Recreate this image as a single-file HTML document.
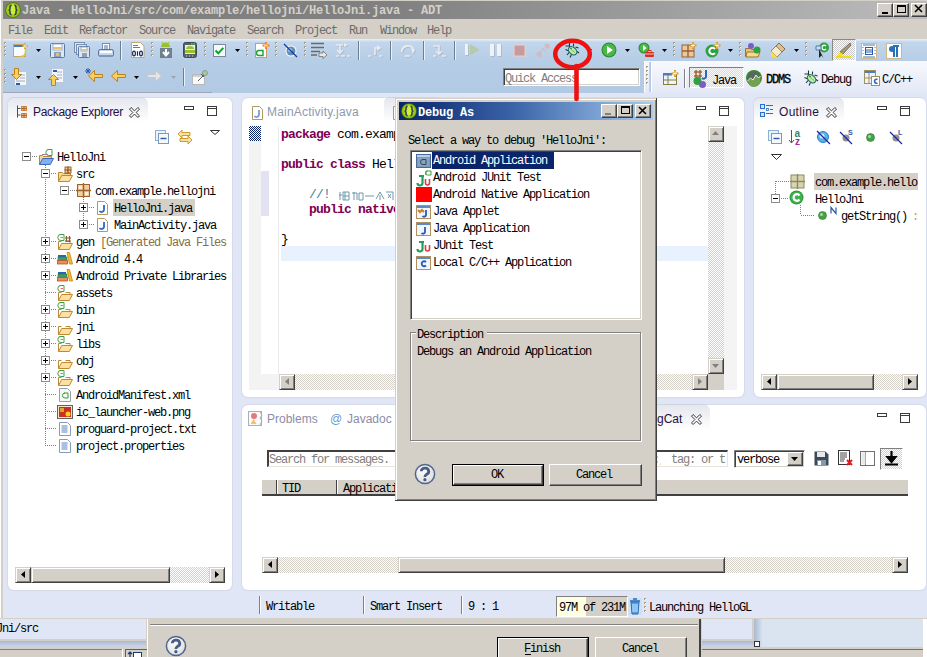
<!DOCTYPE html>
<html><head><meta charset="utf-8">
<style>
*{margin:0;padding:0;box-sizing:border-box}
html,body{width:927px;height:657px;overflow:hidden;background:#d4d0c8;position:relative;font-family:"Liberation Sans",sans-serif}
.a{position:absolute}
svg.a{overflow:visible}
.t{position:absolute;white-space:pre;font-family:"Liberation Mono",monospace;font-size:12px;letter-spacing:-1.2px;line-height:14px;color:#000}
.tb{position:absolute;white-space:pre;font-family:"Liberation Mono",monospace;font-size:12px;font-weight:bold;letter-spacing:-0.2px;line-height:14px;color:#000}
.s{position:absolute;white-space:pre;font-family:"Liberation Sans",sans-serif;font-size:12px;line-height:14px}
.c{position:absolute;white-space:pre;font-family:"Liberation Mono",monospace;font-size:13px;letter-spacing:-0.8px;line-height:15px;color:#000}
.sb{position:absolute;background:#d4d0c8;border-top:1px solid #d4d0c8;border-left:1px solid #d4d0c8;border-right:1px solid #404040;border-bottom:1px solid #404040;box-shadow:inset 1px 1px 0 #fff,inset -1px -1px 0 #808080}
.trk{position:absolute;background-color:#eae8e3;background-image:repeating-conic-gradient(#d4d0c8 0 25%,#fff 0 50%);background-size:2px 2px}
.btn{position:absolute;background:#d4d0c8;border-top:1px solid #fff;border-left:1px solid #fff;border-right:1px solid #404040;border-bottom:1px solid #404040;box-shadow:inset -1px -1px 0 #808080}
.sunk{position:absolute;background:#fff;border-top:1px solid #808080;border-left:1px solid #808080;border-right:1px solid #fff;border-bottom:1px solid #fff;box-shadow:inset 1px 1px 0 #404040,inset -1px -1px 0 #d4d0c8}
</style></head><body>
<div class="a" style="left:0px;top:0px;width:927px;height:657px;background:#d4d0c8"></div>
<div class="a" style="left:0px;top:0px;width:1px;height:618px;background:#fff"></div>
<div class="a" style="left:3px;top:1px;width:924px;height:18px;background:linear-gradient(90deg,#808080 0,#808080 42%,#bcbcbc 100%)"></div>
<svg class="a" style="left:5px;top:2px" width="16" height="16" viewBox="0 0 16 16"><circle cx="8" cy="8" r="7.8" fill="#4a7a00"/><circle cx="8" cy="8" r="7" fill="#9ccc10"/><ellipse cx="8" cy="7.5" rx="4.5" ry="5" fill="#d4f840" opacity=".8"/><path d="M6.6 3.4C4.8 3.4 5 5 5 6.5C5 7.5 4.4 8 3.5 8C4.4 8 5 8.5 5 9.5C5 11 4.8 12.6 6.6 12.6M9.4 3.4C11.2 3.4 11 5 11 6.5C11 7.5 11.6 8 12.5 8C11.6 8 11 8.5 11 9.5C11 11 11.2 12.6 9.4 12.6" stroke="#3a3a5a" stroke-width="1.6" fill="none"/></svg>
<div class="tb" style="left:22px;top:4px;color:#d4d0c8">Java - HelloJni/src/com/example/hellojni/HelloJni.java - ADT</div>
<div class="btn" style="left:877px;top:3px;width:16px;height:14px"></div>
<div class="btn" style="left:893px;top:3px;width:16px;height:14px"></div>
<div class="btn" style="left:911px;top:3px;width:16px;height:14px"></div>
<div class="a" style="left:882px;top:12px;width:6px;height:2px;background:#000"></div>
<div class="a" style="left:897px;top:5px;width:9px;height:8px;border:1px solid #000;border-top-width:2px"></div>
<svg class="a" style="left:914px;top:5px" width="9" height="8" viewBox="0 0 9 8"><path d="M1 0L8 7M8 0L1 7" stroke="#000" stroke-width="1.6"/></svg>
<div class="t" style="left:8px;top:24px;color:#6b6b6b">File</div>
<div class="t" style="left:44px;top:24px;color:#6b6b6b">Edit</div>
<div class="t" style="left:79px;top:24px;color:#6b6b6b">Refactor</div>
<div class="t" style="left:139px;top:24px;color:#6b6b6b">Source</div>
<div class="t" style="left:187px;top:24px;color:#6b6b6b">Navigate</div>
<div class="t" style="left:247px;top:24px;color:#6b6b6b">Search</div>
<div class="t" style="left:295px;top:24px;color:#6b6b6b">Project</div>
<div class="t" style="left:349px;top:24px;color:#6b6b6b">Run</div>
<div class="t" style="left:380px;top:24px;color:#6b6b6b">Window</div>
<div class="t" style="left:427px;top:24px;color:#6b6b6b">Help</div>
<div class="a" style="left:3px;top:39px;width:924px;height:22px;background:linear-gradient(#eaf1f8 0,#c2d6ec 3px,#b6cde6 100%)"></div>
<div class="a" style="left:3px;top:61px;width:641px;height:32px;background:linear-gradient(#b6cde6,#b1c9e3)"></div>
<div class="a" style="left:3px;top:92px;width:209px;height:1px;background:#a0a8b8"></div>
<div class="a" style="left:644px;top:61px;width:283px;height:32px;background:linear-gradient(#f7f9fd,#e3e8f6)"></div>
<div class="a" style="left:3px;top:93px;width:924px;height:525px;background:#e1e6f6"></div>
<svg class="a" style="left:4px;top:42px" width="2" height="16" viewBox="0 0 2 16"><rect x="0" y="0" width="2" height="2" fill="#a89b7e"/><rect x="1" y="1" width="1" height="1" fill="#fff"/><rect x="0" y="4" width="2" height="2" fill="#a89b7e"/><rect x="1" y="5" width="1" height="1" fill="#fff"/><rect x="0" y="8" width="2" height="2" fill="#a89b7e"/><rect x="1" y="9" width="1" height="1" fill="#fff"/><rect x="0" y="12" width="2" height="2" fill="#a89b7e"/><rect x="1" y="13" width="1" height="1" fill="#fff"/></svg>
<svg class="a" style="left:13px;top:43px" width="16" height="16" viewBox="0 0 16 16"><rect x="0.5" y="1.5" width="12" height="12" fill="#f8fbff" stroke="#c8a860"/><rect x="1" y="2" width="11" height="2" fill="#4a7cc0"/><path d="M12.5 4.5v4c0 3-2 5-5 5" stroke="#e8c040" fill="none" stroke-width="1.5"/><path d="M12 0v6M9 3h6" stroke="#d4a020" stroke-width="1.6"/><path d="M12 1v4M10 3h4" stroke="#fff" stroke-width=".7"/></svg>
<svg class="a" style="left:36px;top:49px" width="5" height="3" viewBox="0 0 5 3"><path d="M0 0h5L2.5 3z" fill="#000"/></svg>
<svg class="a" style="left:50px;top:43px" width="16" height="16" viewBox="0 0 16 16"><rect x="0.5" y="0.5" width="14" height="14" rx="1" fill="#dfe8f2" stroke="#5a78a0"/><rect x="3" y="1" width="9" height="6" fill="#fff" stroke="#8aa0c0" stroke-width=".8"/><rect x="3" y="4" width="9" height="2" fill="#e8c070"/><rect x="4" y="9" width="7" height="5" fill="#8aa0c0"/><rect x="6" y="10" width="3" height="3" fill="#e8c070"/></svg>
<svg class="a" style="left:74px;top:42px" width="16" height="16" viewBox="0 0 16 16"><rect x="0.5" y="0.5" width="10" height="10" fill="#dfe8f2" stroke="#7890b0"/><rect x="2.5" y="2.5" width="10" height="10" fill="#dfe8f2" stroke="#7890b0"/><rect x="4.5" y="4.5" width="11" height="11" rx="1" fill="#dfe8f2" stroke="#5a78a0"/><rect x="7" y="5" width="6" height="4" fill="#fff" stroke="#8aa0c0" stroke-width=".8"/><rect x="7" y="7" width="6" height="1.5" fill="#e8c070"/><rect x="8" y="11" width="5" height="4" fill="#8aa0c0"/></svg>
<svg class="a" style="left:98px;top:43px" width="16" height="16" viewBox="0 0 16 16"><rect x="4.5" y="0.5" width="7" height="7" fill="#fff" stroke="#7090b8"/><path d="M6 3h4M6 5h4" stroke="#4a6ea0"/><rect x="0.5" y="6.5" width="15" height="7" rx="2" fill="#c8d8ec" stroke="#5070a0"/><rect x="2" y="8" width="12" height="2" fill="#fff"/><rect x="1" y="12" width="14" height="2" fill="#8098c0"/></svg>
<div class="a" style="left:120px;top:41px;width:1px;height:19px;background:#6f7f8f"></div>
<div class="a" style="left:121px;top:41px;width:1px;height:19px;background:#e8f0f8"></div>
<svg class="a" style="left:130px;top:42px" width="16" height="16" viewBox="0 0 16 16"><path d="M1.5 0.5h9l3.5 3.5v11.5h-12.5z" fill="#fff" stroke="#c0a878"/><path d="M3 3.5h5M3 5.5h7" stroke="#5080c0"/><g stroke="#1a2a5a" stroke-width="1.2" fill="none"><ellipse cx="4" cy="11.5" rx="1.4" ry="2.3"/><path d="M7.5 9.2v4.6"/><ellipse cx="11" cy="11.5" rx="1.4" ry="2.3"/></g></svg>
<svg class="a" style="left:151px;top:42px" width="2" height="16" viewBox="0 0 2 16"><rect x="0" y="0" width="2" height="2" fill="#a89b7e"/><rect x="1" y="1" width="1" height="1" fill="#fff"/><rect x="0" y="4" width="2" height="2" fill="#a89b7e"/><rect x="1" y="5" width="1" height="1" fill="#fff"/><rect x="0" y="8" width="2" height="2" fill="#a89b7e"/><rect x="1" y="9" width="1" height="1" fill="#fff"/><rect x="0" y="12" width="2" height="2" fill="#a89b7e"/><rect x="1" y="13" width="1" height="1" fill="#fff"/></svg>
<svg class="a" style="left:159px;top:42px" width="16" height="16" viewBox="0 0 16 16"><path d="M2 5a4 4 0 0 1 9 0z" fill="#98c030"/><path d="M3 0l1.5 2M10 0l-1.5 2" stroke="#98c030"/><rect x="1" y="6" width="12" height="10" fill="#6f8090"/><path d="M7 7v6M4 10l3 3.5l3-3.5" stroke="#fff" stroke-width="2" fill="none"/></svg>
<svg class="a" style="left:183px;top:42px" width="16" height="16" viewBox="0 0 16 16"><rect x="0.5" y="0.5" width="13" height="15" rx="2" fill="#58606a" stroke="#404850"/><rect x="2" y="3" width="10" height="9" fill="#e8eef0"/><path d="M3 7a4 3 0 0 1 8 0z" fill="#98c030"/><rect x="2" y="8" width="10" height="3" fill="#98c030"/><rect x="8" y="1" width="1.5" height="1.5" fill="#30e030"/><rect x="10.5" y="1" width="1.5" height="1.5" fill="#30e030"/><path d="M3 14h1M6 14h1M9 14h1" stroke="#ddd"/></svg>
<svg class="a" style="left:204px;top:42px" width="2" height="16" viewBox="0 0 2 16"><rect x="0" y="0" width="2" height="2" fill="#a89b7e"/><rect x="1" y="1" width="1" height="1" fill="#fff"/><rect x="0" y="4" width="2" height="2" fill="#a89b7e"/><rect x="1" y="5" width="1" height="1" fill="#fff"/><rect x="0" y="8" width="2" height="2" fill="#a89b7e"/><rect x="1" y="9" width="1" height="1" fill="#fff"/><rect x="0" y="12" width="2" height="2" fill="#a89b7e"/><rect x="1" y="13" width="1" height="1" fill="#fff"/></svg>
<svg class="a" style="left:213px;top:44px" width="14" height="14" viewBox="0 0 14 14"><rect x="0.5" y="0.5" width="12" height="12" fill="#f4fbff" stroke="#7a8898"/><path d="M2.5 6.5l2.8 2.8l5-5.5" stroke="#10a020" stroke-width="2" fill="none"/></svg>
<svg class="a" style="left:235px;top:49px" width="5" height="3" viewBox="0 0 5 3"><path d="M0 0h5L2.5 3z" fill="#000"/></svg>
<svg class="a" style="left:246px;top:42px" width="2" height="16" viewBox="0 0 2 16"><rect x="0" y="0" width="2" height="2" fill="#a89b7e"/><rect x="1" y="1" width="1" height="1" fill="#fff"/><rect x="0" y="4" width="2" height="2" fill="#a89b7e"/><rect x="1" y="5" width="1" height="1" fill="#fff"/><rect x="0" y="8" width="2" height="2" fill="#a89b7e"/><rect x="1" y="9" width="1" height="1" fill="#fff"/><rect x="0" y="12" width="2" height="2" fill="#a89b7e"/><rect x="1" y="13" width="1" height="1" fill="#fff"/></svg>
<svg class="a" style="left:254px;top:42px" width="16" height="16" viewBox="0 0 16 16"><rect x="1.5" y="1.5" width="11" height="14" fill="#fff" stroke="#c0a070"/><path d="M4 8.5h5v5h-4a2.5 2.5 0 0 1 0-5" stroke="#20a030" stroke-width="1.4" fill="none"/><path d="M12 0v7M8.5 3.5h7" stroke="#f08020" stroke-width="2"/><path d="M12 1.5v4M10 3.5h4" stroke="#ffe0a0" stroke-width=".8"/></svg>
<svg class="a" style="left:275px;top:42px" width="2" height="16" viewBox="0 0 2 16"><rect x="0" y="0" width="2" height="2" fill="#a89b7e"/><rect x="1" y="1" width="1" height="1" fill="#fff"/><rect x="0" y="4" width="2" height="2" fill="#a89b7e"/><rect x="1" y="5" width="1" height="1" fill="#fff"/><rect x="0" y="8" width="2" height="2" fill="#a89b7e"/><rect x="1" y="9" width="1" height="1" fill="#fff"/><rect x="0" y="12" width="2" height="2" fill="#a89b7e"/><rect x="1" y="13" width="1" height="1" fill="#fff"/></svg>
<svg class="a" style="left:283px;top:43px" width="16" height="16" viewBox="0 0 16 16"><circle cx="8" cy="8" r="5.5" fill="#fff"/><circle cx="8" cy="8" r="4.5" fill="#6090b8"/><circle cx="7" cy="7" r="2" fill="#a0c8e8"/><path d="M1 1l13 13" stroke="#1a3a9a" stroke-width="1.3"/></svg>
<svg class="a" style="left:304px;top:42px" width="2" height="16" viewBox="0 0 2 16"><rect x="0" y="0" width="2" height="2" fill="#a89b7e"/><rect x="1" y="1" width="1" height="1" fill="#fff"/><rect x="0" y="4" width="2" height="2" fill="#a89b7e"/><rect x="1" y="5" width="1" height="1" fill="#fff"/><rect x="0" y="8" width="2" height="2" fill="#a89b7e"/><rect x="1" y="9" width="1" height="1" fill="#fff"/><rect x="0" y="12" width="2" height="2" fill="#a89b7e"/><rect x="1" y="13" width="1" height="1" fill="#fff"/></svg>
<svg class="a" style="left:311px;top:42px" width="16" height="16" viewBox="0 0 16 16"><path d="M0 1.5h13M0 5.5h13M0 9.5h9M0 13h6" stroke="#6a6a6a" stroke-width="1.6"/><path d="M8 11h4v-2l4 4l-4 3.5v-2h-4z" fill="#e8e8e8" stroke="#707070" stroke-width=".8"/></svg>
<svg class="a" style="left:335px;top:42px" width="16" height="16" viewBox="0 0 16 16"><g transform="translate(.8,.8)" opacity=".45"><path d="M1 3h7M5 3v8M2 8l3 3l3-3M1 14h3M6 14h4M12 14h3" stroke="#8a96a4" stroke-width="1.6" fill="none"/><path d="M9 1l4 2l-4 2" fill="#8a96a4"/></g><g opacity=".9"><path d="M1 3h7M5 3v8M2 8l3 3l3-3M1 14h3M6 14h4M12 14h3" stroke="#f0f0f0" stroke-width="1.6" fill="none"/><path d="M9 1l4 2l-4 2" fill="#f0f0f0"/></g></svg>
<div class="a" style="left:358px;top:41px;width:1px;height:19px;background:#6f7f8f"></div>
<div class="a" style="left:359px;top:41px;width:1px;height:19px;background:#e8f0f8"></div>
<svg class="a" style="left:367px;top:42px" width="16" height="16" viewBox="0 0 16 16"><g transform="translate(.8,.8)" opacity=".45"><path d="M8 13V6h4M10 4l3 2l-3 2M1 14h3M12 14h3" stroke="#8a96a4" stroke-width="1.6" fill="none"/></g><g opacity=".9"><path d="M8 13V6h4M10 4l3 2l-3 2M1 14h3M12 14h3" stroke="#f0f0f0" stroke-width="1.6" fill="none"/></g></svg>
<div class="a" style="left:390px;top:41px;width:1px;height:19px;background:#6f7f8f"></div>
<div class="a" style="left:391px;top:41px;width:1px;height:19px;background:#e8f0f8"></div>
<svg class="a" style="left:400px;top:42px" width="16" height="16" viewBox="0 0 16 16"><g transform="translate(.8,.8)" opacity=".45"><path d="M2 10a6 5 0 0 1 12-2" stroke="#8a96a4" stroke-width="1.8" fill="none"/><path d="M11 6l4 2l-2 4z" fill="#8a96a4"/><path d="M5 14h5" stroke="#8a96a4" stroke-width="1.6"/></g><g opacity=".9"><path d="M2 10a6 5 0 0 1 12-2" stroke="#f0f0f0" stroke-width="1.8" fill="none"/><path d="M11 6l4 2l-2 4z" fill="#f0f0f0"/><path d="M5 14h5" stroke="#f0f0f0" stroke-width="1.6"/></g></svg>
<div class="a" style="left:423px;top:41px;width:1px;height:19px;background:#6f7f8f"></div>
<div class="a" style="left:424px;top:41px;width:1px;height:19px;background:#e8f0f8"></div>
<svg class="a" style="left:432px;top:42px" width="16" height="16" viewBox="0 0 16 16"><g transform="translate(.8,.8)" opacity=".45"><path d="M1 4h6v7M4 9l3 3l3-3M1 14h3M10 14h4" stroke="#8a96a4" stroke-width="1.6" fill="none"/></g><g opacity=".9"><path d="M1 4h6v7M4 9l3 3l3-3M1 14h3M10 14h4" stroke="#f0f0f0" stroke-width="1.6" fill="none"/></g></svg>
<div class="a" style="left:454px;top:41px;width:1px;height:19px;background:#6f7f8f"></div>
<div class="a" style="left:455px;top:41px;width:1px;height:19px;background:#e8f0f8"></div>
<svg class="a" style="left:464px;top:42px" width="16" height="16" viewBox="0 0 16 16"><g transform="translate(.8,.8)" opacity=".45"><rect x="1" y="2" width="3" height="11" fill="#8a96a4"/><path d="M6 2l9 5.5l-9 5.5z" fill="#b8c8a8"/></g><g opacity=".9"><rect x="1" y="2" width="3" height="11" fill="#f8f8f8"/><path d="M6 2l9 5.5l-9 5.5z" fill="#b8c8a8"/></g></svg>
<svg class="a" style="left:488px;top:42px" width="16" height="16" viewBox="0 0 16 16"><g transform="translate(.8,.8)" opacity=".45"><rect x="2" y="2" width="4" height="12" fill="#8a96a4"/><rect x="9" y="2" width="4" height="12" fill="#8a96a4"/></g><g opacity=".9"><rect x="2" y="2" width="4" height="12" fill="#f8f8f8"/><rect x="9" y="2" width="4" height="12" fill="#f8f8f8"/></g></svg>
<svg class="a" style="left:512px;top:42px" width="16" height="16" viewBox="0 0 16 16"><g transform="translate(.8,.8)" opacity=".45"><rect x="2" y="3" width="11" height="11" fill="#c89898" stroke="#f0d0d0"/></g><g opacity=".9"><rect x="2" y="3" width="11" height="11" fill="#c89898" stroke="#f0d0d0"/></g></svg>
<svg class="a" style="left:535px;top:42px" width="16" height="16" viewBox="0 0 16 16"><g transform="translate(.8,.8)" opacity=".45"><circle cx="4" cy="12" r="2.5" fill="#d8b8b8"/><circle cx="12" cy="4" r="2.5" fill="#d8b8b8"/><path d="M4 12l4-6l3 4" stroke="#c8c0c0" fill="none"/></g><g opacity=".9"><circle cx="4" cy="12" r="2.5" fill="#d8b8b8"/><circle cx="12" cy="4" r="2.5" fill="#d8b8b8"/><path d="M4 12l4-6l3 4" stroke="#c8c0c0" fill="none"/></g></svg>
<svg class="a" style="left:563px;top:42px" width="16" height="16" viewBox="0 0 16 16"><path d="M6.5 0.5v4.5M2.5 4h4M2.5 7.5l3.5 1.5M4 13l2.5-3M7 15.5l1.5-3M10.5 1.5v3M12.5 5l3 1M14 9.5l2 1.5" stroke="#1a3a30" stroke-width="1.1"/><ellipse cx="9.6" cy="8.8" rx="3.4" ry="4.8" transform="rotate(-45 9.6 8.8)" fill="#c4eca0" stroke="#1a6a7a" stroke-width="1.1"/><path d="M8 7.5l4 3" stroke="#70b050" stroke-width=".8"/><circle cx="8" cy="6.5" r=".8" fill="#1a6a30"/></svg>
<svg class="a" style="left:587px;top:49px" width="5" height="3" viewBox="0 0 5 3"><path d="M0 0h5L2.5 3z" fill="#000"/></svg>
<svg class="a" style="left:601px;top:42px" width="16" height="16" viewBox="0 0 16 16"><circle cx="8" cy="8" r="7.5" fill="#2a8a2a"/><circle cx="8" cy="8" r="6.5" fill="#48b848"/><path d="M6 4l6 4l-6 4z" fill="#fff"/></svg>
<svg class="a" style="left:625px;top:49px" width="5" height="3" viewBox="0 0 5 3"><path d="M0 0h5L2.5 3z" fill="#000"/></svg>
<svg class="a" style="left:638px;top:42px" width="16" height="16" viewBox="0 0 16 16"><circle cx="6" cy="6" r="5.5" fill="#2a8a2a"/><circle cx="6" cy="6" r="4.5" fill="#48b848"/><path d="M5 3l3.5 3l-3.5 3z" fill="#fff"/><rect x="7" y="10" width="9" height="5" rx="1" fill="#d83020"/><rect x="10" y="8.5" width="3" height="2" fill="none" stroke="#d83020"/><path d="M7 12h9" stroke="#fff" stroke-width=".7"/></svg>
<svg class="a" style="left:662px;top:49px" width="5" height="3" viewBox="0 0 5 3"><path d="M0 0h5L2.5 3z" fill="#000"/></svg>
<svg class="a" style="left:673px;top:42px" width="2" height="16" viewBox="0 0 2 16"><rect x="0" y="0" width="2" height="2" fill="#a89b7e"/><rect x="1" y="1" width="1" height="1" fill="#fff"/><rect x="0" y="4" width="2" height="2" fill="#a89b7e"/><rect x="1" y="5" width="1" height="1" fill="#fff"/><rect x="0" y="8" width="2" height="2" fill="#a89b7e"/><rect x="1" y="9" width="1" height="1" fill="#fff"/><rect x="0" y="12" width="2" height="2" fill="#a89b7e"/><rect x="1" y="13" width="1" height="1" fill="#fff"/></svg>
<svg class="a" style="left:681px;top:42px" width="16" height="16" viewBox="0 0 16 16"><rect x="1" y="3" width="12" height="12" fill="#e8c8a0" stroke="#a06030"/><path d="M7 3v12M1 9h12" stroke="#a06030" stroke-width="1.4"/><path d="M12 0v7M8.5 3.5h7" stroke="#d8a020" stroke-width="2"/><path d="M12 1.5v4M10 3.5h4" stroke="#fff" stroke-width=".8"/></svg>
<svg class="a" style="left:705px;top:42px" width="16" height="16" viewBox="0 0 16 16"><circle cx="7" cy="9" r="6.5" fill="#30a040"/><path d="M10 7a3.2 3.2 0 1 0 0 4" stroke="#fff" stroke-width="2" fill="none"/><path d="M12 0v7M8.5 3.5h7" stroke="#d8a020" stroke-width="2"/><path d="M12 1.5v4M10 3.5h4" stroke="#fff" stroke-width=".8"/></svg>
<svg class="a" style="left:728px;top:49px" width="5" height="3" viewBox="0 0 5 3"><path d="M0 0h5L2.5 3z" fill="#000"/></svg>
<svg class="a" style="left:739px;top:42px" width="2" height="16" viewBox="0 0 2 16"><rect x="0" y="0" width="2" height="2" fill="#a89b7e"/><rect x="1" y="1" width="1" height="1" fill="#fff"/><rect x="0" y="4" width="2" height="2" fill="#a89b7e"/><rect x="1" y="5" width="1" height="1" fill="#fff"/><rect x="0" y="8" width="2" height="2" fill="#a89b7e"/><rect x="1" y="9" width="1" height="1" fill="#fff"/><rect x="0" y="12" width="2" height="2" fill="#a89b7e"/><rect x="1" y="13" width="1" height="1" fill="#fff"/></svg>
<svg class="a" style="left:745px;top:42px" width="16" height="16" viewBox="0 0 16 16"><path d="M0.5 6.5h5l1 1h7v7h-13z" fill="#e8c070" stroke="#a07828"/><path d="M2 10h13l-2 5h-12z" fill="#f8d890" stroke="#a07828"/><circle cx="6" cy="4" r="3" fill="#7860c0"/><circle cx="12" cy="8" r="3.5" fill="#30a040"/></svg>
<svg class="a" style="left:770px;top:42px" width="16" height="16" viewBox="0 0 16 16"><path d="M9 1l6 6l-3 3l-6-6z" fill="#d8c098" stroke="#8a6a40"/><path d="M6 4l6 6l-5 5l-6-6z" fill="#f4ead0" stroke="#a08050"/><path d="M1 9l6 6l-6 0z" fill="#f8e040"/></svg>
<svg class="a" style="left:794px;top:49px" width="5" height="3" viewBox="0 0 5 3"><path d="M0 0h5L2.5 3z" fill="#000"/></svg>
<svg class="a" style="left:805px;top:42px" width="2" height="16" viewBox="0 0 2 16"><rect x="0" y="0" width="2" height="2" fill="#a89b7e"/><rect x="1" y="1" width="1" height="1" fill="#fff"/><rect x="0" y="4" width="2" height="2" fill="#a89b7e"/><rect x="1" y="5" width="1" height="1" fill="#fff"/><rect x="0" y="8" width="2" height="2" fill="#a89b7e"/><rect x="1" y="9" width="1" height="1" fill="#fff"/><rect x="0" y="12" width="2" height="2" fill="#a89b7e"/><rect x="1" y="13" width="1" height="1" fill="#fff"/></svg>
<svg class="a" style="left:814px;top:42px" width="16" height="16" viewBox="0 0 16 16"><circle cx="10" cy="5.5" r="5" fill="#30a040"/><path d="M12 4a2.3 2.3 0 1 0 0 3" stroke="#fff" stroke-width="1.4" fill="none"/><path d="M2 4h5v4h-5z" fill="#c8e0f8" stroke="#5a7aa0"/><path d="M5 7v9l2.5-2.5l2 2.5z" fill="#222"/></svg>
<div class="a" style="left:832px;top:39px;width:24px;height:22px;background-color:#eee;background-image:repeating-conic-gradient(#c8c8c8 0 25%,#fff 0 50%);background-size:2px 2px;border-left:1px solid #888;border-top:1px solid #888;border-right:1px solid #fff;border-bottom:1px solid #fff"></div>
<svg class="a" style="left:836px;top:42px" width="16" height="16" viewBox="0 0 16 16"><path d="M14 1l1 2l-8 9l-3-2z" fill="#a89878" stroke="#6a5a40" stroke-width=".8"/><path d="M4 10l3 2l-2 3h-5z" fill="#f8e020"/><path d="M0 15h15" stroke="#f0d800" stroke-width="1.6"/></svg>
<svg class="a" style="left:861px;top:43px" width="16" height="16" viewBox="0 0 16 16"><rect x="0.5" y="0.5" width="15" height="15" fill="#fff" stroke="#d0b888"/><path d="M2 2h12M2 14h12" stroke="#4a7ab8"/><rect x="4.5" y="4.5" width="7" height="7" fill="#fff" stroke="#2a5aa8"/><path d="M5 7h6M5 9h6" stroke="#2a5aa8"/><path d="M2 4v1M2 7v1M2 10v1M14 4v1M14 7v1M14 10v1" stroke="#4a7ab8"/></svg>
<svg class="a" style="left:886px;top:43px" width="16" height="16" viewBox="0 0 16 16"><rect x="0.5" y="0.5" width="15" height="15" fill="#fff" stroke="#d0b888"/><path d="M7 3h6M8 3v11M11 3v11" stroke="#2a70b8" stroke-width="2"/><circle cx="6" cy="6" r="3" fill="#2a70b8"/></svg>
<svg class="a" style="left:4px;top:69px" width="2" height="16" viewBox="0 0 2 16"><rect x="0" y="0" width="2" height="2" fill="#a89b7e"/><rect x="1" y="1" width="1" height="1" fill="#fff"/><rect x="0" y="4" width="2" height="2" fill="#a89b7e"/><rect x="1" y="5" width="1" height="1" fill="#fff"/><rect x="0" y="8" width="2" height="2" fill="#a89b7e"/><rect x="1" y="9" width="1" height="1" fill="#fff"/><rect x="0" y="12" width="2" height="2" fill="#a89b7e"/><rect x="1" y="13" width="1" height="1" fill="#fff"/></svg>
<svg class="a" style="left:11px;top:68px" width="16" height="18" viewBox="0 0 16 18"><rect x="3.5" y="3.5" width="12" height="14" fill="#f4f6fa" stroke="#c0c8d8"/><path d="M9 7h5M9 10h5M5 13h9" stroke="#9ab0d0"/><rect x="5" y="15" width="4" height="2" fill="#2a5aa8"/><path d="M3.5 0.5v6h-3l5 5l5-5h-3v-6z" fill="#f8d060" stroke="#c08018"/></svg>
<svg class="a" style="left:36px;top:76px" width="5" height="3" viewBox="0 0 5 3"><path d="M0 0h5L2.5 3z" fill="#000"/></svg>
<svg class="a" style="left:48px;top:68px" width="16" height="18" viewBox="0 0 16 18"><rect x="3.5" y="0.5" width="12" height="14" fill="#f4f6fa" stroke="#c0c8d8"/><path d="M9 4h5M9 7h5M9 10h5" stroke="#9ab0d0"/><rect x="5" y="2" width="4" height="2" fill="#2a5aa8"/><path d="M3.5 17.5v-6h-3l5-5l5 5h-3v6z" fill="#f8d060" stroke="#c08018"/></svg>
<svg class="a" style="left:73px;top:76px" width="5" height="3" viewBox="0 0 5 3"><path d="M0 0h5L2.5 3z" fill="#000"/></svg>
<svg class="a" style="left:85px;top:68px" width="18" height="16" viewBox="0 0 18 16"><path d="M17.5 6.5h-8v-4l-6 5.5l6 5.5v-4h8z" fill="#f8d060" stroke="#c08018"/><path d="M1 1l4 4M5 1l-4 4M3 0v6M0 3h6" stroke="#2a5aa8"/></svg>
<svg class="a" style="left:110px;top:68px" width="16" height="16" viewBox="0 0 16 16"><path d="M15.5 6.5h-8v-4l-6 5.5l6 5.5v-4h8z" fill="#f8d060" stroke="#c08018"/></svg>
<svg class="a" style="left:134px;top:76px" width="5" height="3" viewBox="0 0 5 3"><path d="M0 0h5L2.5 3z" fill="#000"/></svg>
<svg class="a" style="left:147px;top:68px" width="16" height="16" viewBox="0 0 16 16"><path d="M0.5 6.5h8v-4l6 5.5l-6 5.5v-4h-8z" fill="#e4e4e4" stroke="#c8c8c8"/></svg>
<svg class="a" style="left:171px;top:76px" width="5" height="3" viewBox="0 0 5 3"><path d="M0 0h5L2.5 3z" fill="#9aa4ae"/></svg>
<div class="a" style="left:183px;top:68px;width:1px;height:18px;background:#6f7f8f"></div>
<div class="a" style="left:184px;top:68px;width:1px;height:18px;background:#e8f0f8"></div>
<svg class="a" style="left:192px;top:70px" width="16" height="16" viewBox="0 0 16 16"><rect x="0.5" y="4.5" width="12" height="10" fill="#fafafa" stroke="#b8b8b8"/><path d="M1 6h11" stroke="#9aaac0"/><path d="M6 11l6-6" stroke="#606060"/><circle cx="13" cy="3" r="2.5" fill="#a8c8a0" stroke="#708070" stroke-width=".6"/><path d="M9 4l3 3" stroke="#506050"/></svg>
<div class="a" style="left:503px;top:68px;width:137px;height:18px;background:#fff;border-top:1px solid #808080;border-left:1px solid #808080;border-bottom:1px solid #fff;border-right:1px solid #fff;box-shadow:inset 1px 1px 0 #404040,inset -1px -1px 0 #d4d0c8"></div>
<div class="t" style="left:505px;top:72px;color:#808080">Quick Access</div>
<div class="a" style="left:644px;top:61px;width:1px;height:31px;background:#fff"></div>
<svg class="a" style="left:646px;top:66px" width="2" height="20" viewBox="0 0 2 20"><rect x="0" y="0" width="2" height="2" fill="#a89b7e"/><rect x="1" y="1" width="1" height="1" fill="#fff"/><rect x="0" y="4" width="2" height="2" fill="#a89b7e"/><rect x="1" y="5" width="1" height="1" fill="#fff"/><rect x="0" y="8" width="2" height="2" fill="#a89b7e"/><rect x="1" y="9" width="1" height="1" fill="#fff"/><rect x="0" y="12" width="2" height="2" fill="#a89b7e"/><rect x="1" y="13" width="1" height="1" fill="#fff"/><rect x="0" y="16" width="2" height="2" fill="#a89b7e"/><rect x="1" y="17" width="1" height="1" fill="#fff"/></svg>
<div class="a" style="left:649px;top:62px;width:3px;height:30px;background:linear-gradient(90deg,#c8daee,#a8c2e0);border-right:1px solid #fff"></div>
<svg class="a" style="left:662px;top:70px" width="16" height="16" viewBox="0 0 16 16"><rect x="1.5" y="3.5" width="13" height="11" fill="#eaf6fe" stroke="#8a7a40"/><rect x="1" y="3" width="9" height="2.5" fill="#4a7ac8"/><path d="M6 4v11M2 10h12" stroke="#8a7a40"/><path d="M13 0v7M9.5 3.5h7" stroke="#d8a020" stroke-width="2"/><path d="M13 1.5v4M11 3.5h4" stroke="#fff" stroke-width=".8"/></svg>
<div class="a" style="left:684px;top:69px;width:2px;height:19px;background:#808080;border-right:1px solid #fff"></div>
<div class="a" style="left:689px;top:67px;width:55px;height:21px;background-color:#eee;background-image:repeating-conic-gradient(#d8d8d8 0 25%,#fafafa 0 50%);background-size:2px 2px;border-top:1px solid #808080;border-left:1px solid #808080;border-right:1px solid #fff;border-bottom:1px solid #fff"></div>
<svg class="a" style="left:693px;top:70px" width="16" height="18" viewBox="0 0 16 18"><path d="M1 2h8M1 6h8M3 0v8M7 0v8" stroke="#a06838" stroke-width="1.5"/><path d="M13 0v7a2.5 2.5 0 0 1-4 1" stroke="#2a6ab8" stroke-width="2" fill="none"/><circle cx="4.5" cy="11" r="4" fill="#30a040"/><circle cx="9.5" cy="14.5" r="3.5" fill="#7860c0"/></svg>
<div class="t" style="left:712px;top:74px;">Java</div>
<svg class="a" style="left:746px;top:70px" width="17" height="17" viewBox="0 0 17 17"><circle cx="8" cy="8" r="8" fill="#3a8a2a"/><circle cx="8" cy="8" r="6.5" fill="#586860"/><path d="M1.5 11l3-3l2.5 2l3-5l2.5 3l2-2v4a6.5 6.5 0 0 1-13 1z" fill="#70a050"/><path d="M1.5 11l3-3l2.5 2l3-5l2.5 3l2-2" stroke="#e8f0e0" fill="none" stroke-width="1"/></svg>
<div class="t" style="left:766px;top:73px;-webkit-text-stroke:0.3px #000">DDMS</div>
<svg class="a" style="left:802px;top:70px" width="16" height="16" viewBox="0 0 16 16"><path d="M6.5 0.5v4.5M2.5 4h4M2.5 7.5l3.5 1.5M4 13l2.5-3M7 15.5l1.5-3M10.5 1.5v3M12.5 5l3 1M14 9.5l2 1.5" stroke="#1a3a30" stroke-width="1.1"/><ellipse cx="9.6" cy="8.8" rx="3.4" ry="4.8" transform="rotate(-45 9.6 8.8)" fill="#c4eca0" stroke="#1a6a7a" stroke-width="1.1"/><path d="M8 7.5l4 3" stroke="#70b050" stroke-width=".8"/><circle cx="8" cy="6.5" r=".8" fill="#1a6a30"/></svg>
<div class="t" style="left:821px;top:73px;">Debug</div>
<svg class="a" style="left:864px;top:70px" width="16" height="16" viewBox="0 0 16 16"><rect x="0.5" y="0.5" width="11" height="13" fill="#f0f4fa" stroke="#a09060"/><rect x="1" y="1" width="10" height="2" fill="#4a7ac8"/><path d="M5 3v11M1 8h10" stroke="#a09060"/><rect x="7.5" y="6.5" width="8" height="9" fill="#fff" stroke="#a09060"/><path d="M13.5 9.5a2 2 0 1 0 0 3.5" stroke="#2a6ab8" stroke-width="1.6" fill="none"/></svg>
<div class="t" style="left:882px;top:73px;">C/C++</div>
<div class="a" style="left:8px;top:98px;width:224px;height:492px;background:#fff;border-radius:6px;box-shadow:0 0 0 1px #d6dbea,0 1px 1px #cfd5e6"></div>
<div class="a" style="left:8px;top:98px;width:140px;height:24px;border-radius:6px 8px 0 0;background:linear-gradient(#e4e7ee,#fff);box-shadow:0 -1px 0 #cfd3dc"></div>
<svg class="a" style="left:16px;top:105px" width="11" height="13" viewBox="0 0 11 13"><path d="M1.5 0.5v12M1.5 3.5h3M1.5 10h3" stroke="#505050" stroke-width="1"/><rect x="5" y="1" width="6" height="5" fill="#f4c080"/><rect x="5" y="8" width="6" height="5" fill="#f4c080"/><path d="M8 1v5M5 3.5h6M8 8v5M5 10.5h6" stroke="#b06020" stroke-width="1"/><path d="M5.5 1.5h5v4h-5zM5.5 8.5h5v4h-5z" stroke="#c07030" fill="none" stroke-width=".8"/></svg>
<div class="s" style="left:33px;top:105px;color:#2a1040;font-size:12px;letter-spacing:-0.3px">Package Explorer</div>
<svg class="a" style="left:129px;top:107px" width="11" height="11" viewBox="0 0 11 11"><path d="M0.5 2.1L2.1 0.5L5.5 3.9L8.9 0.5L10.5 2.1L7.1 5.5L10.5 8.9L8.9 10.5L5.5 7.1L2.1 10.5L0.5 8.9L3.9 5.5z" fill="#fff" stroke="#333" stroke-width="1"/></svg>
<div class="a" style="left:184px;top:106px;width:10px;height:4px;border:1px solid #3a3a3a"></div>
<div class="a" style="left:207px;top:106px;width:10px;height:10px;border:1px solid #3a3a3a"></div>
<div class="a" style="left:207px;top:108px;width:10px;height:1px;background:#3a3a3a"></div>
<svg class="a" style="left:155px;top:130px" width="14" height="14" viewBox="0 0 14 14"><rect x="0.5" y="0.5" width="10" height="10" fill="#eaf2fb" stroke="#8ab0d8"/><rect x="3.5" y="3.5" width="10" height="10" fill="#f4f8fd" stroke="#7a9ac0"/><path d="M5.5 8.5h6" stroke="#2a5aa8" stroke-width="1.4"/></svg>
<svg class="a" style="left:177px;top:129px" width="16" height="16" viewBox="0 0 16 16"><path d="M1 5l4-4v2.5h8v3h-8v2.5z" fill="#f8e0a0" stroke="#c89020" stroke-width=".9"/><path d="M15 11l-4-4v2.5h-8v3h8v2.5z" fill="#f8e0a0" stroke="#c89020" stroke-width=".9"/></svg>
<svg class="a" style="left:210px;top:130px" width="10" height="5" viewBox="0 0 10 5"><path d="M0.5 0.5h9L5 4.5z" fill="#fff" stroke="#333"/></svg>
<div class="a" style="left:26px;top:162px;width:1px;height:0px;background-image:linear-gradient(#808080 50%,transparent 50%);background-size:1px 2px"></div>
<div class="a" style="left:45px;top:163px;width:1px;height:283px;background-image:linear-gradient(#808080 50%,transparent 50%);background-size:1px 2px"></div>
<div class="a" style="left:64px;top:180px;width:1px;height:2px;background-image:linear-gradient(#808080 50%,transparent 50%);background-size:1px 2px"></div>
<div class="a" style="left:83px;top:197px;width:1px;height:25px;background-image:linear-gradient(#808080 50%,transparent 50%);background-size:1px 2px"></div>
<div class="a" style="left:22px;top:152px;width:9px;height:9px;border:1px solid #8c8c8c;background:#fff"></div>
<div class="a" style="left:24px;top:156px;width:5px;height:1px;background:#000"></div>
<div class="a" style="left:32px;top:156px;width:5px;height:1px;background-image:linear-gradient(90deg,#808080 50%,transparent 50%);background-size:2px 1px"></div>
<svg class="a" style="left:38px;top:149px" width="16" height="16" viewBox="0 0 16 16"><path d="M1.5 15.5v-9h3l1 1h8v2" stroke="#b88838" fill="#f8d890"/><path d="M1.5 15.5l3.2-6h10.8l-3.2 6z" fill="#80b0f0" stroke="#3a6ac0"/><path d="M9.5 0.5h4.5v6h-3.2a3 3 0 0 1 0-6" stroke="#40a040" fill="#fff"/><path d="M4 5.5h6" stroke="#a080a0"/></svg>
<div class="t" style="left:57px;top:151px;">HelloJni</div>
<div class="a" style="left:41px;top:169px;width:9px;height:9px;border:1px solid #8c8c8c;background:#fff"></div>
<div class="a" style="left:43px;top:173px;width:5px;height:1px;background:#000"></div>
<div class="a" style="left:51px;top:173px;width:5px;height:1px;background-image:linear-gradient(90deg,#808080 50%,transparent 50%);background-size:2px 1px"></div>
<svg class="a" style="left:57px;top:166px" width="16" height="16" viewBox="0 0 16 16"><path d="M1.5 15.5v-9h4l1 1h7v2" stroke="#b88838" fill="#f8d890"/><path d="M1.5 15.5l3.2-6h10.8l-3.2 6z" fill="#fbe0a0" stroke="#c08830"/><rect x="8" y="1" width="6" height="6" fill="#f0c890" stroke="#8a5020" stroke-width=".8"/><path d="M11 0.5v7M7.5 4h7" stroke="#8a5020" stroke-width="1.2"/></svg>
<div class="t" style="left:76px;top:168px;">src</div>
<div class="a" style="left:60px;top:186px;width:9px;height:9px;border:1px solid #8c8c8c;background:#fff"></div>
<div class="a" style="left:62px;top:190px;width:5px;height:1px;background:#000"></div>
<div class="a" style="left:70px;top:190px;width:5px;height:1px;background-image:linear-gradient(90deg,#808080 50%,transparent 50%);background-size:2px 1px"></div>
<svg class="a" style="left:76px;top:183px" width="16" height="16" viewBox="0 0 16 16"><rect x="1.5" y="1.5" width="12" height="12" fill="#f0d0a0" stroke="#a06030"/><path d="M7.5 0v15M0 7.5h15" stroke="#a06030" stroke-width="1.4"/><rect x="3" y="3" width="3" height="3" fill="#fff0d0"/><rect x="9" y="9" width="3" height="3" fill="#fff0d0"/></svg>
<div class="t" style="left:95px;top:185px;">com.example.hellojni</div>
<div class="a" style="left:79px;top:203px;width:9px;height:9px;border:1px solid #8c8c8c;background:#fff"></div>
<div class="a" style="left:81px;top:207px;width:5px;height:1px;background:#000"></div>
<div class="a" style="left:83px;top:205px;width:1px;height:5px;background:#000"></div>
<div class="a" style="left:89px;top:207px;width:5px;height:1px;background-image:linear-gradient(90deg,#808080 50%,transparent 50%);background-size:2px 1px"></div>
<svg class="a" style="left:95px;top:200px" width="16" height="16" viewBox="0 0 16 16"><path d="M2.5 1.5h7l3 3v10h-10z" fill="#fff" stroke="#b09a60"/><path d="M9 5v5a2.5 2.5 0 0 1-4.5 1" stroke="#2a6ac8" stroke-width="1.8" fill="none"/></svg>
<div class="a" style="left:113px;top:199px;width:82px;height:17px;background:#d4d0c8"></div>
<div class="t" style="left:114px;top:202px;">HelloJni.java</div>
<div class="a" style="left:79px;top:220px;width:9px;height:9px;border:1px solid #8c8c8c;background:#fff"></div>
<div class="a" style="left:81px;top:224px;width:5px;height:1px;background:#000"></div>
<div class="a" style="left:83px;top:222px;width:1px;height:5px;background:#000"></div>
<div class="a" style="left:89px;top:224px;width:5px;height:1px;background-image:linear-gradient(90deg,#808080 50%,transparent 50%);background-size:2px 1px"></div>
<svg class="a" style="left:95px;top:217px" width="16" height="16" viewBox="0 0 16 16"><path d="M2.5 1.5h7l3 3v10h-10z" fill="#fff" stroke="#b09a60"/><path d="M9 5v5a2.5 2.5 0 0 1-4.5 1" stroke="#2a6ac8" stroke-width="1.8" fill="none"/></svg>
<div class="t" style="left:114px;top:219px;">MainActivity.java</div>
<div class="a" style="left:41px;top:237px;width:9px;height:9px;border:1px solid #8c8c8c;background:#fff"></div>
<div class="a" style="left:43px;top:241px;width:5px;height:1px;background:#000"></div>
<div class="a" style="left:45px;top:239px;width:1px;height:5px;background:#000"></div>
<div class="a" style="left:51px;top:241px;width:5px;height:1px;background-image:linear-gradient(90deg,#808080 50%,transparent 50%);background-size:2px 1px"></div>
<svg class="a" style="left:57px;top:234px" width="16" height="16" viewBox="0 0 16 16"><path d="M1.5 15.5v-8M1.5 7.5h3M8.5 7.5h4.5v2" stroke="#b88838" fill="none"/><path d="M1.5 15.5l3.2-6h10.8l-3.2 6z" fill="#fbe0a0" stroke="#c08830"/><path d="M2.5 0.5h4.5v6h-3.2a3 3 0 0 1 0-6" stroke="#40a040" fill="#fff"/><path d="M3.5 3.5h2.5" stroke="#e07070"/><path d="M9.5 2v6M12.5 2v6M8 4h6M8 7h6" stroke="#8a5a30" stroke-width="1.2"/></svg>
<div class="t" style="left:76px;top:236px;">gen</div>
<div class="t" style="left:100px;top:236px;color:#8a7040">[Generated Java Files]</div>
<div class="a" style="left:41px;top:254px;width:9px;height:9px;border:1px solid #8c8c8c;background:#fff"></div>
<div class="a" style="left:43px;top:258px;width:5px;height:1px;background:#000"></div>
<div class="a" style="left:45px;top:256px;width:1px;height:5px;background:#000"></div>
<div class="a" style="left:51px;top:258px;width:5px;height:1px;background-image:linear-gradient(90deg,#808080 50%,transparent 50%);background-size:2px 1px"></div>
<svg class="a" style="left:57px;top:251px" width="16" height="16" viewBox="0 0 16 16"><rect x="1" y="4" width="8" height="2" fill="#2a62b8"/><rect x="1" y="6" width="9" height="3.5" fill="#3a9a6a" stroke="#2a7a4a" stroke-width=".6"/><rect x="0.5" y="9.5" width="10" height="3.5" fill="#e8905a" stroke="#b05820" stroke-width=".8"/><path d="M10 1.5l2.5 0l3 11.5h-3z" fill="#f8c030" stroke="#c08010" stroke-width=".8"/></svg>
<div class="t" style="left:76px;top:253px;">Android 4.4</div>
<div class="a" style="left:41px;top:271px;width:9px;height:9px;border:1px solid #8c8c8c;background:#fff"></div>
<div class="a" style="left:43px;top:275px;width:5px;height:1px;background:#000"></div>
<div class="a" style="left:45px;top:273px;width:1px;height:5px;background:#000"></div>
<div class="a" style="left:51px;top:275px;width:5px;height:1px;background-image:linear-gradient(90deg,#808080 50%,transparent 50%);background-size:2px 1px"></div>
<svg class="a" style="left:57px;top:268px" width="16" height="16" viewBox="0 0 16 16"><rect x="1" y="4" width="8" height="2" fill="#2a62b8"/><rect x="1" y="6" width="9" height="3.5" fill="#3a9a6a" stroke="#2a7a4a" stroke-width=".6"/><rect x="0.5" y="9.5" width="10" height="3.5" fill="#e8905a" stroke="#b05820" stroke-width=".8"/><path d="M10 1.5l2.5 0l3 11.5h-3z" fill="#f8c030" stroke="#c08010" stroke-width=".8"/></svg>
<div class="t" style="left:76px;top:270px;">Android Private Libraries</div>
<div class="a" style="left:45px;top:292px;width:11px;height:1px;background-image:linear-gradient(90deg,#808080 50%,transparent 50%);background-size:2px 1px"></div>
<svg class="a" style="left:57px;top:285px" width="16" height="16" viewBox="0 0 16 16"><path d="M1.5 15.5v-8M1.5 7.5h3M8.5 7.5h4.5v2" stroke="#b88838" fill="none"/><path d="M1.5 15.5l3.2-6h10.8l-3.2 6z" fill="#fbe0a0" stroke="#c08830"/><path d="M2.5 0.5h4.5v6h-3.2a3 3 0 0 1 0-6" stroke="#40a040" fill="#fff"/><path d="M3.5 3.5h2.5" stroke="#e07070"/></svg>
<div class="t" style="left:76px;top:287px;">assets</div>
<div class="a" style="left:41px;top:305px;width:9px;height:9px;border:1px solid #8c8c8c;background:#fff"></div>
<div class="a" style="left:43px;top:309px;width:5px;height:1px;background:#000"></div>
<div class="a" style="left:45px;top:307px;width:1px;height:5px;background:#000"></div>
<div class="a" style="left:51px;top:309px;width:5px;height:1px;background-image:linear-gradient(90deg,#808080 50%,transparent 50%);background-size:2px 1px"></div>
<svg class="a" style="left:57px;top:302px" width="16" height="16" viewBox="0 0 16 16"><path d="M1.5 15.5v-8M1.5 7.5h3M8.5 7.5h4.5v2" stroke="#b88838" fill="none"/><path d="M1.5 15.5l3.2-6h10.8l-3.2 6z" fill="#fbe0a0" stroke="#c08830"/><path d="M2.5 0.5h4.5v6h-3.2a3 3 0 0 1 0-6" stroke="#40a040" fill="#fff"/><path d="M3.5 3.5h2.5" stroke="#e07070"/></svg>
<div class="t" style="left:76px;top:304px;">bin</div>
<div class="a" style="left:41px;top:322px;width:9px;height:9px;border:1px solid #8c8c8c;background:#fff"></div>
<div class="a" style="left:43px;top:326px;width:5px;height:1px;background:#000"></div>
<div class="a" style="left:45px;top:324px;width:1px;height:5px;background:#000"></div>
<div class="a" style="left:51px;top:326px;width:5px;height:1px;background-image:linear-gradient(90deg,#808080 50%,transparent 50%);background-size:2px 1px"></div>
<svg class="a" style="left:57px;top:319px" width="16" height="16" viewBox="0 0 16 16"><path d="M1.5 15.5v-8M1.5 7.5h3M8.5 7.5h4.5v2" stroke="#b88838" fill="none"/><path d="M1.5 15.5l3.2-6h10.8l-3.2 6z" fill="#fbe0a0" stroke="#c08830"/></svg>
<div class="t" style="left:76px;top:321px;">jni</div>
<div class="a" style="left:41px;top:339px;width:9px;height:9px;border:1px solid #8c8c8c;background:#fff"></div>
<div class="a" style="left:43px;top:343px;width:5px;height:1px;background:#000"></div>
<div class="a" style="left:45px;top:341px;width:1px;height:5px;background:#000"></div>
<div class="a" style="left:51px;top:343px;width:5px;height:1px;background-image:linear-gradient(90deg,#808080 50%,transparent 50%);background-size:2px 1px"></div>
<svg class="a" style="left:57px;top:336px" width="16" height="16" viewBox="0 0 16 16"><path d="M1.5 15.5v-8M1.5 7.5h3M8.5 7.5h4.5v2" stroke="#b88838" fill="none"/><path d="M1.5 15.5l3.2-6h10.8l-3.2 6z" fill="#fbe0a0" stroke="#c08830"/><path d="M2.5 0.5h4.5v6h-3.2a3 3 0 0 1 0-6" stroke="#40a040" fill="#fff"/><path d="M3.5 3.5h2.5" stroke="#e07070"/></svg>
<div class="t" style="left:76px;top:338px;">libs</div>
<div class="a" style="left:41px;top:356px;width:9px;height:9px;border:1px solid #8c8c8c;background:#fff"></div>
<div class="a" style="left:43px;top:360px;width:5px;height:1px;background:#000"></div>
<div class="a" style="left:45px;top:358px;width:1px;height:5px;background:#000"></div>
<div class="a" style="left:51px;top:360px;width:5px;height:1px;background-image:linear-gradient(90deg,#808080 50%,transparent 50%);background-size:2px 1px"></div>
<svg class="a" style="left:57px;top:353px" width="16" height="16" viewBox="0 0 16 16"><path d="M1.5 15.5v-8M1.5 7.5h3M8.5 7.5h4.5v2" stroke="#b88838" fill="none"/><path d="M1.5 15.5l3.2-6h10.8l-3.2 6z" fill="#fbe0a0" stroke="#c08830"/></svg>
<div class="t" style="left:76px;top:355px;">obj</div>
<div class="a" style="left:41px;top:373px;width:9px;height:9px;border:1px solid #8c8c8c;background:#fff"></div>
<div class="a" style="left:43px;top:377px;width:5px;height:1px;background:#000"></div>
<div class="a" style="left:45px;top:375px;width:1px;height:5px;background:#000"></div>
<div class="a" style="left:51px;top:377px;width:5px;height:1px;background-image:linear-gradient(90deg,#808080 50%,transparent 50%);background-size:2px 1px"></div>
<svg class="a" style="left:57px;top:370px" width="16" height="16" viewBox="0 0 16 16"><path d="M1.5 15.5v-8M1.5 7.5h3M8.5 7.5h4.5v2" stroke="#b88838" fill="none"/><path d="M1.5 15.5l3.2-6h10.8l-3.2 6z" fill="#fbe0a0" stroke="#c08830"/><path d="M2.5 0.5h4.5v6h-3.2a3 3 0 0 1 0-6" stroke="#40a040" fill="#fff"/><path d="M3.5 3.5h2.5" stroke="#e07070"/></svg>
<div class="t" style="left:76px;top:372px;">res</div>
<div class="a" style="left:45px;top:394px;width:11px;height:1px;background-image:linear-gradient(90deg,#808080 50%,transparent 50%);background-size:2px 1px"></div>
<svg class="a" style="left:57px;top:387px" width="16" height="16" viewBox="0 0 16 16"><path d="M2.5 1.5h8l3 3v10h-11z" fill="#f8f8f8" stroke="#9aa0a8"/><path d="M7 6h4v5h-3a2.5 2.5 0 0 1 0-5" stroke="#30a030" fill="none" stroke-width="1"/></svg>
<div class="t" style="left:76px;top:389px;">AndroidManifest.xml</div>
<div class="a" style="left:45px;top:411px;width:11px;height:1px;background-image:linear-gradient(90deg,#808080 50%,transparent 50%);background-size:2px 1px"></div>
<svg class="a" style="left:57px;top:404px" width="16" height="16" viewBox="0 0 16 16"><rect x="0.5" y="1.5" width="15" height="13" fill="#f0e8d0" stroke="#606060"/><rect x="2" y="3" width="12" height="10" fill="#c83020"/><circle cx="11" cy="10" r="2.5" fill="#f8d020"/><rect x="3" y="4" width="4" height="4" fill="#e8a030"/></svg>
<div class="t" style="left:76px;top:406px;">ic_launcher-web.png</div>
<div class="a" style="left:45px;top:428px;width:11px;height:1px;background-image:linear-gradient(90deg,#808080 50%,transparent 50%);background-size:2px 1px"></div>
<svg class="a" style="left:57px;top:421px" width="16" height="16" viewBox="0 0 16 16"><path d="M2.5 1.5h8l3 3v10h-11z" fill="#fff" stroke="#8a9ab0"/><path d="M4.5 5h6M4.5 7h6M4.5 9h6M4.5 11h6" stroke="#5a80c0"/></svg>
<div class="t" style="left:76px;top:423px;">proguard-project.txt</div>
<div class="a" style="left:45px;top:445px;width:11px;height:1px;background-image:linear-gradient(90deg,#808080 50%,transparent 50%);background-size:2px 1px"></div>
<svg class="a" style="left:57px;top:438px" width="16" height="16" viewBox="0 0 16 16"><path d="M2.5 1.5h8l3 3v10h-11z" fill="#fff" stroke="#8a9ab0"/><path d="M4.5 5h6M4.5 7h6M4.5 9h6M4.5 11h6" stroke="#5a80c0"/></svg>
<div class="t" style="left:76px;top:440px;">project.properties</div>
<div class="a" style="left:229px;top:148px;width:3px;height:20px;background:#fff"></div>
<div class="trk" style="left:15px;top:567px;width:210px;height:16px"></div>
<div class="sb" style="left:15px;top:567px;width:16px;height:16px"></div>
<svg class="a" style="left:21px;top:571px" width="4" height="8" viewBox="0 0 4 8"><path d="M4 0v7L0 3.5z" fill="#000"/></svg>
<div class="sb" style="left:209px;top:567px;width:16px;height:16px"></div>
<svg class="a" style="left:215px;top:571px" width="4" height="8" viewBox="0 0 4 8"><path d="M0 0v7L4 3.5z" fill="#000"/></svg>
<div class="sb" style="left:31px;top:567px;width:139px;height:16px"></div>
<div class="a" style="left:227px;top:148px;width:5px;height:300px;background:#fff"></div>
<div class="a" style="left:242px;top:98px;width:502px;height:299px;background:#fff;border-radius:6px;box-shadow:0 0 0 1px #d6dbea,0 1px 1px #cfd5e6"></div>
<svg class="a" style="left:250px;top:105px" width="12" height="14" viewBox="0 0 12 14"><path d="M2.5 1.5h7l3 3v10h-10z" fill="#fff" stroke="#b09a60"/><path d="M9 5v5a2.5 2.5 0 0 1-4.5 1" stroke="#7a9ad8" stroke-width="1.8" fill="none"/></svg>
<div class="s" style="left:267px;top:105px;color:#8c9aae;font-size:12px;letter-spacing:0.2px">MainActivity.java</div>
<div class="a" style="left:384px;top:98px;width:60px;height:24px;border-radius:6px 8px 0 0;background:linear-gradient(#e4e7ee,#fff);box-shadow:0 -1px 0 #cfd3dc"></div>
<svg class="a" style="left:391px;top:105px" width="12" height="14" viewBox="0 0 12 14"><path d="M2.5 1.5h7l3 3v10h-10z" fill="#fff" stroke="#b09a60"/><path d="M9 5v5a2.5 2.5 0 0 1-4.5 1" stroke="#2a6ac8" stroke-width="1.8" fill="none"/></svg>
<div class="a" style="left:696px;top:106px;width:10px;height:4px;border:1px solid #3a3a3a"></div>
<div class="a" style="left:719px;top:106px;width:10px;height:10px;border:1px solid #3a3a3a"></div>
<div class="a" style="left:719px;top:108px;width:10px;height:1px;background:#3a3a3a"></div>
<div class="a" style="left:249px;top:126px;width:12px;height:264px;background:#f3f3f3"></div>
<div class="a" style="left:249px;top:126px;width:12px;height:15px;background-color:#0a246a;background-image:repeating-conic-gradient(#0a246a 0 25%,#fff 0 50%);background-size:2px 2px"></div>
<div class="a" style="left:261px;top:171px;width:8px;height:45px;background:#e2e2f2"></div>
<div class="a" style="left:278px;top:126px;width:1px;height:248px;background:#ececec"></div>
<div class="a" style="left:249px;top:374px;width:30px;height:16px;background:#f3f3f3"></div>
<div class="a" style="left:724px;top:126px;width:13px;height:264px;background:#f4f4f4"></div>
<div class="a" style="left:281px;top:246px;width:427px;height:15px;background:#e8f2fe"></div>
<div class="c" style="left:281px;top:127px"><span style="color:#7f0055;font-weight:bold">package</span><span style=""> com.example.hellojni;</span></div>
<div class="c" style="left:281px;top:157px"><span style="color:#7f0055;font-weight:bold">public</span><span style=""> </span><span style="color:#7f0055;font-weight:bold">class</span><span style=""> HelloJni {</span></div>
<div class="c" style="left:281px;top:187px"><span style="color:#3f7f9f">    //! </span></div>
<svg class="a" style="left:339px;top:191px" width="55" height="10" viewBox="0 0 55 10"><g stroke="#6f98a8" stroke-width="1" fill="none"><path d="M1 1v8M0 4h3M4 1h6v8h-6zM4 5h6M6 1v8"/><path d="M13 2h5v7M15 1v8M20 2h4v7h-4z"/><path d="M26 5h9"/><path d="M37 8l4-7l4 7M41 4v5"/><path d="M47 1h7v8M49 3l3 4M52 3l-3 4"/></g></svg>
<div class="c" style="left:281px;top:202px"><span style="color:#7f0055;font-weight:bold">    public</span><span style=""> </span><span style="color:#7f0055;font-weight:bold">native</span><span style=""> String getString();</span></div>
<div class="c" style="left:281px;top:232px"><span style="">}</span></div>
<div class="trk" style="left:708px;top:126px;width:16px;height:248px"></div>
<div class="sb" style="left:708px;top:126px;width:16px;height:16px"></div>
<svg class="a" style="left:712px;top:131px" width="7" height="4" viewBox="0 0 7 4"><path d="M0 4h7L3.5 0z" fill="#808080"/></svg>
<div class="sb" style="left:708px;top:358px;width:16px;height:16px"></div>
<svg class="a" style="left:712px;top:364px" width="7" height="4" viewBox="0 0 7 4"><path d="M0 0h7L3.5 4z" fill="#808080"/></svg>
<div class="a" style="left:708px;top:374px;width:16px;height:16px;background:#d4d0c8"></div>
<div class="trk" style="left:279px;top:374px;width:429px;height:16px"></div>
<div class="sb" style="left:279px;top:374px;width:16px;height:16px"></div>
<svg class="a" style="left:285px;top:378px" width="4" height="7" viewBox="0 0 4 7"><path d="M4 0v7L0 3.5z" fill="#808080"/></svg>
<div class="sb" style="left:692px;top:374px;width:16px;height:16px"></div>
<svg class="a" style="left:698px;top:378px" width="4" height="7" viewBox="0 0 4 7"><path d="M0 0v7L4 3.5z" fill="#808080"/></svg>
<div class="a" style="left:754px;top:98px;width:172px;height:299px;background:#fff;border-radius:6px;box-shadow:0 0 0 1px #d6dbea,0 1px 1px #cfd5e6"></div>
<div class="a" style="left:754px;top:98px;width:90px;height:24px;border-radius:6px 8px 0 0;background:linear-gradient(#e4e7ee,#fff);box-shadow:0 -1px 0 #cfd3dc"></div>
<svg class="a" style="left:760px;top:104px" width="15" height="14" viewBox="0 0 15 14"><rect x="0.5" y="0.5" width="4" height="4" fill="#cfe3f8" stroke="#2a70c8"/><rect x="0.5" y="8.5" width="4" height="4" fill="#cfe3f8" stroke="#2a70c8"/><rect x="6.5" y="4.5" width="2" height="2" fill="none" stroke="#2a70c8" stroke-width=".8"/><path d="M6 1.5h7M10 5.5h3M6 9.5h7" stroke="#2a70c8"/></svg>
<div class="s" style="left:779px;top:105px;color:#2a1040;font-size:12px;letter-spacing:0.3px">Outline</div>
<svg class="a" style="left:826px;top:107px" width="11" height="11" viewBox="0 0 11 11"><path d="M0.5 2.1L2.1 0.5L5.5 3.9L8.9 0.5L10.5 2.1L7.1 5.5L10.5 8.9L8.9 10.5L5.5 7.1L2.1 10.5L0.5 8.9L3.9 5.5z" fill="#fff" stroke="#333" stroke-width="1"/></svg>
<div class="a" style="left:877px;top:106px;width:10px;height:4px;border:1px solid #3a3a3a"></div>
<div class="a" style="left:900px;top:106px;width:10px;height:10px;border:1px solid #3a3a3a"></div>
<div class="a" style="left:900px;top:108px;width:10px;height:1px;background:#3a3a3a"></div>
<svg class="a" style="left:768px;top:130px" width="14" height="14" viewBox="0 0 14 14"><rect x="0.5" y="0.5" width="10" height="10" fill="#eaf2fb" stroke="#8ab0d8"/><rect x="3.5" y="3.5" width="10" height="10" fill="#f4f8fd" stroke="#7a9ac0"/><path d="M5.5 8.5h6" stroke="#2a5aa8" stroke-width="1.4"/></svg>
<svg class="a" style="left:789px;top:129px" width="14" height="16" viewBox="0 0 14 16"><path d="M2.5 1v13M0 11l2.5 3l2.5-3" stroke="#555" fill="none"/><text x="5.5" y="7.5" font-family="Liberation Sans" font-weight="bold" font-size="10" fill="#2a8a7a">a</text><text x="6" y="16" font-family="Liberation Sans" font-weight="bold" font-size="10" fill="#a02a9a">z</text></svg>
<svg class="a" style="left:816px;top:130px" width="15" height="15" viewBox="0 0 15 15"><circle cx="7" cy="7" r="5.5" fill="#5ab0e8" stroke="#2a80c8"/><circle cx="6" cy="6" r="2.5" fill="#d0f0ff"/><path d="M1 1l13 13" stroke="#1a2a9a" stroke-width="1.3"/></svg>
<svg class="a" style="left:839px;top:129px" width="15" height="16" viewBox="0 0 15 16"><circle cx="7" cy="9" r="3.5" fill="#909090"/><path d="M1 3l12 12" stroke="#1a2a9a" stroke-width="1.3"/><text x="9" y="6" font-family="Liberation Sans" font-weight="bold" font-size="7" fill="#2a5aa8">S</text></svg>
<svg class="a" style="left:866px;top:133px" width="9" height="9" viewBox="0 0 9 9"><circle cx="4.5" cy="4.5" r="4" fill="#48a048" stroke="#2a7a2a" stroke-width=".6"/><circle cx="3.5" cy="3.5" r="1.5" fill="#a0e0a0"/></svg>
<svg class="a" style="left:889px;top:129px" width="15" height="16" viewBox="0 0 15 16"><circle cx="7" cy="9" r="3.5" fill="#909090"/><path d="M1 3l12 12" stroke="#1a2a9a" stroke-width="1.3"/><text x="9" y="6" font-family="Liberation Sans" font-weight="bold" font-size="7" fill="#2a5aa8">L</text></svg>
<svg class="a" style="left:771px;top:154px" width="11" height="6" viewBox="0 0 11 6"><path d="M0.5 0.5h10L5.5 5.5z" fill="#fff" stroke="#333"/></svg>
<div class="a" style="left:814px;top:173px;width:104px;height:17px;background:#d4d0c8"></div>
<div class="a" style="left:776px;top:181px;width:14px;height:1px;background-image:linear-gradient(90deg,#808080 50%,transparent 50%);background-size:2px 1px"></div>
<div class="a" style="left:775px;top:181px;width:1px;height:13px;background-image:linear-gradient(#808080 50%,transparent 50%);background-size:1px 2px"></div>
<svg class="a" style="left:790px;top:174px" width="15" height="15" viewBox="0 0 15 15"><rect x="1" y="1" width="13" height="13" fill="#d8d4b0" stroke="#8a8a60"/><path d="M7.5 0v15M0 7.5h15" stroke="#8a8a60" stroke-width="1.4"/></svg>
<div class="t" style="left:815px;top:176px;">com.example.hello</div>
<div class="a" style="left:771px;top:194px;width:9px;height:9px;border:1px solid #8c8c8c;background:#fff"></div>
<div class="a" style="left:773px;top:198px;width:5px;height:1px;background:#000"></div>
<div class="a" style="left:781px;top:198px;width:8px;height:1px;background-image:linear-gradient(90deg,#808080 50%,transparent 50%);background-size:2px 1px"></div>
<svg class="a" style="left:789px;top:190px" width="15" height="15" viewBox="0 0 15 15"><circle cx="7.5" cy="7.5" r="7" fill="#2a9a3a"/><circle cx="7.5" cy="7.5" r="6" fill="#40b050"/><path d="M10.5 5.5a3.3 3.3 0 1 0 0 4" stroke="#fff" stroke-width="2.2" fill="none"/></svg>
<div class="t" style="left:815px;top:193px;">HelloJni</div>
<div class="a" style="left:800px;top:205px;width:1px;height:10px;background-image:linear-gradient(#808080 50%,transparent 50%);background-size:1px 2px"></div>
<div class="a" style="left:801px;top:215px;width:13px;height:1px;background-image:linear-gradient(90deg,#808080 50%,transparent 50%);background-size:2px 1px"></div>
<svg class="a" style="left:818px;top:211px" width="9" height="9" viewBox="0 0 9 9"><circle cx="4.5" cy="4.5" r="4" fill="#48a048" stroke="#2a7a2a" stroke-width=".6"/><circle cx="3.5" cy="3.5" r="1.5" fill="#a0e0a0"/></svg>
<svg class="a" style="left:830px;top:207px" width="7" height="7" viewBox="0 0 7 7"><path d="M1 6.5V0.5L6 6.5V0.5" stroke="#2a5aa8" stroke-width="1.2" fill="none"/></svg>
<div class="t" style="left:841px;top:210px;">getString()</div>
<div class="t" style="left:912px;top:210px;color:#c8a050">:</div>
<div class="a" style="left:918px;top:148px;width:7px;height:80px;background:#fff"></div>
<div class="trk" style="left:761px;top:374px;width:157px;height:16px"></div>
<div class="sb" style="left:761px;top:374px;width:16px;height:16px"></div>
<svg class="a" style="left:767px;top:378px" width="4" height="8" viewBox="0 0 4 8"><path d="M4 0v7L0 3.5z" fill="#000"/></svg>
<div class="sb" style="left:902px;top:374px;width:16px;height:16px"></div>
<svg class="a" style="left:908px;top:378px" width="4" height="8" viewBox="0 0 4 8"><path d="M0 0v7L4 3.5z" fill="#000"/></svg>
<div class="sb" style="left:777px;top:374px;width:97px;height:16px"></div>
<div class="a" style="left:242px;top:405px;width:684px;height:185px;background:#fff;border-radius:6px;box-shadow:0 0 0 1px #d6dbea,0 1px 1px #cfd5e6"></div>
<div class="a" style="left:600px;top:405px;width:110px;height:25px;border-radius:6px 8px 0 0;background:linear-gradient(#e4e7ee,#fff);box-shadow:0 -1px 0 #cfd3dc"></div>
<svg class="a" style="left:248px;top:411px" width="15" height="15" viewBox="0 0 15 15"><rect x="0.5" y="0.5" width="13" height="14" fill="#fafafa" stroke="#a8b0c0"/><circle cx="6" cy="5" r="3" fill="#e87878"/><path d="M2.5 13l3-5l3 5z" fill="#f8c060"/><path d="M12 1l2 3l-2 3l2 3l-2 4" stroke="#a8b0c0" fill="none"/></svg>
<div class="s" style="left:267px;top:412px;color:#8c8ca8;font-size:12px">Problems</div>
<div class="s" style="left:330px;top:412px;color:#6a9ad0;font-size:12px">@</div>
<div class="s" style="left:347px;top:412px;color:#8c8ca8;font-size:12px">Javadoc</div>
<div class="s" style="left:657px;top:412px;color:#2a1040;font-size:12px">gCat</div>
<svg class="a" style="left:691px;top:414px" width="11" height="11" viewBox="0 0 11 11"><path d="M0.5 2.1L2.1 0.5L5.5 3.9L8.9 0.5L10.5 2.1L7.1 5.5L10.5 8.9L8.9 10.5L5.5 7.1L2.1 10.5L0.5 8.9L3.9 5.5z" fill="#fff" stroke="#333" stroke-width="1"/></svg>
<div class="a" style="left:877px;top:413px;width:10px;height:4px;border:1px solid #3a3a3a"></div>
<div class="a" style="left:900px;top:413px;width:10px;height:10px;border:1px solid #3a3a3a"></div>
<div class="a" style="left:900px;top:415px;width:10px;height:1px;background:#3a3a3a"></div>
<div class="a" style="left:267px;top:450px;width:461px;height:17px;background:#fff;border-top:2px solid #404040;border-left:2px solid #404040;border-bottom:1px solid #e8e4dc;border-right:1px solid #e8e4dc"></div>
<div class="t" style="left:269px;top:453px;color:#808080">Search for messages. Accepts Java regexes. Prefix with pid:, app:, tag: or t</div>
<div class="a" style="left:661px;top:453px;width:4px;height:12px;background:#fff"></div>
<div class="a" style="left:734px;top:450px;width:71px;height:18px;background:#fff;border-top:1px solid #808080;border-left:1px solid #808080;border-bottom:1px solid #fff;border-right:1px solid #fff;box-shadow:inset 1px 1px 0 #404040,inset -1px -1px 0 #d4d0c8"></div>
<div class="t" style="left:737px;top:453px;">verbose</div>
<div class="btn" style="left:787px;top:452px;width:16px;height:14px"></div>
<svg class="a" style="left:791px;top:457px" width="7" height="4" viewBox="0 0 7 4"><path d="M0 0h7L3.5 4z" fill="#000"/></svg>
<svg class="a" style="left:814px;top:451px" width="15" height="15" viewBox="0 0 15 15"><path d="M0.5 0.5h11l3 3v11h-14z" fill="#3a4a5a"/><rect x="3" y="1" width="8" height="5" fill="#e8e8e8"/><rect x="3" y="9" width="9" height="6" fill="#8898a8"/><rect x="4" y="10" width="3" height="4" fill="#fff"/></svg>
<svg class="a" style="left:838px;top:450px" width="16" height="17" viewBox="0 0 16 17"><rect x="0.5" y="0.5" width="11" height="14" fill="#fff" stroke="#333"/><path d="M2 3h7M2 5h7M2 7h7M2 9h5M2 11h4" stroke="#444"/><path d="M9 10l5 5M14 10l-5 5" stroke="#e02020" stroke-width="2"/></svg>
<svg class="a" style="left:860px;top:451px" width="15" height="15" viewBox="0 0 15 15"><rect x="0.5" y="0.5" width="14" height="14" fill="#fff" stroke="#707070"/><path d="M5.5 1v13" stroke="#707070"/><rect x="1.5" y="1.5" width="4" height="12" fill="#e8e8e8"/></svg>
<div class="a" style="left:880px;top:448px;width:23px;height:22px;background-color:#eee;background-image:repeating-conic-gradient(#d0d0d0 0 25%,#fff 0 50%);background-size:2px 2px;border-top:1px solid #808080;border-left:1px solid #808080;border-right:1px solid #fff;border-bottom:1px solid #fff"></div>
<svg class="a" style="left:884px;top:451px" width="15" height="15" viewBox="0 0 15 15"><path d="M7.5 0v10M3.5 6l4 5l4-5z" stroke="#000" stroke-width="2.2" fill="#000"/><path d="M1 13.5h13" stroke="#000" stroke-width="2"/></svg>
<div class="a" style="left:262px;top:480px;width:646px;height:16px;background:#d4d0c8;border-bottom:2px solid #404040"></div>
<div class="a" style="left:276px;top:480px;width:1px;height:14px;background:#404040"></div>
<div class="a" style="left:277px;top:480px;width:1px;height:14px;background:#fff"></div>
<div class="a" style="left:336px;top:480px;width:1px;height:14px;background:#404040"></div>
<div class="a" style="left:337px;top:480px;width:1px;height:14px;background:#fff"></div>
<div class="t" style="left:282px;top:482px;">TID</div>
<div class="t" style="left:343px;top:482px;">Application</div>
<div class="trk" style="left:262px;top:557px;width:646px;height:16px"></div>
<div class="sb" style="left:262px;top:557px;width:16px;height:16px"></div>
<svg class="a" style="left:268px;top:561px" width="4" height="8" viewBox="0 0 4 8"><path d="M4 0v7L0 3.5z" fill="#000"/></svg>
<div class="sb" style="left:892px;top:557px;width:16px;height:16px"></div>
<svg class="a" style="left:898px;top:561px" width="4" height="8" viewBox="0 0 4 8"><path d="M0 0v7L4 3.5z" fill="#000"/></svg>
<div class="sb" style="left:398px;top:557px;width:327px;height:16px"></div>
<div class="a" style="left:259px;top:596px;width:1px;height:18px;background:#808080"></div>
<div class="a" style="left:260px;top:596px;width:1px;height:18px;background:#fff"></div>
<div class="t" style="left:266px;top:600px;">Writable</div>
<div class="a" style="left:363px;top:596px;width:1px;height:18px;background:#808080"></div>
<div class="a" style="left:364px;top:596px;width:1px;height:18px;background:#fff"></div>
<div class="t" style="left:370px;top:600px;">Smart Insert</div>
<div class="a" style="left:461px;top:596px;width:1px;height:18px;background:#808080"></div>
<div class="a" style="left:462px;top:596px;width:1px;height:18px;background:#fff"></div>
<div class="t" style="left:468px;top:600px;">9 : 1</div>
<div class="a" style="left:556px;top:596px;width:72px;height:21px;background:#d4d0c8;border-top:1px solid #808080;border-left:1px solid #808080;border-bottom:1px solid #fff;border-right:1px solid #fff"></div>
<div class="a" style="left:557px;top:597px;width:29px;height:19px;background:#ffffe1"></div>
<div class="t" style="left:559px;top:601px;">97M of 231M</div>
<svg class="a" style="left:628px;top:598px" width="14" height="17" viewBox="0 0 14 17"><rect x="0" y="0" width="14" height="17" fill="#cfe0f2"/><path d="M2 3h10M5 1h4" stroke="#2a6ab8" stroke-width="1.5"/><path d="M3 4h8l-1 12h-6z" fill="#5aa0d8" stroke="#2a6ab8"/><path d="M5 6v8M7 6v8M9 6v8" stroke="#cfe8ff"/></svg>
<svg class="a" style="left:644px;top:598px" width="2" height="16" viewBox="0 0 2 16"><rect x="0" y="0" width="2" height="2" fill="#a89b7e"/><rect x="1" y="1" width="1" height="1" fill="#fff"/><rect x="0" y="4" width="2" height="2" fill="#a89b7e"/><rect x="1" y="5" width="1" height="1" fill="#fff"/><rect x="0" y="8" width="2" height="2" fill="#a89b7e"/><rect x="1" y="9" width="1" height="1" fill="#fff"/><rect x="0" y="12" width="2" height="2" fill="#a89b7e"/><rect x="1" y="13" width="1" height="1" fill="#fff"/></svg>
<div class="t" style="left:649px;top:601px;">Launching HelloGL</div>
<div class="a" style="left:395px;top:98px;width:262px;height:403px;background:#d4d0c8;border-right:1px solid #404040;border-bottom:1px solid #404040;box-shadow:inset 1px 1px 0 #d4d0c8,inset 2px 2px 0 #fff,inset -1px -1px 0 #808080"></div>
<div class="a" style="left:399px;top:102px;width:254px;height:18px;background:linear-gradient(90deg,#0a246a 0,#3a64a8 45%,#a6caf0 100%)"></div>
<svg class="a" style="left:401px;top:103px" width="16" height="16" viewBox="0 0 16 16"><circle cx="8" cy="8" r="7.8" fill="#4a7a00"/><circle cx="8" cy="8" r="7" fill="#9ccc10"/><ellipse cx="8" cy="7.5" rx="4.5" ry="5" fill="#d4f840" opacity=".8"/><path d="M6.6 3.4C4.8 3.4 5 5 5 6.5C5 7.5 4.4 8 3.5 8C4.4 8 5 8.5 5 9.5C5 11 4.8 12.6 6.6 12.6M9.4 3.4C11.2 3.4 11 5 11 6.5C11 7.5 11.6 8 12.5 8C11.6 8 11 8.5 11 9.5C11 11 11.2 12.6 9.4 12.6" stroke="#3a3a5a" stroke-width="1.6" fill="none"/></svg>
<div class="tb" style="left:418px;top:106px;color:#fff">Debug As</div>
<div class="btn" style="left:601px;top:104px;width:16px;height:14px"></div>
<div class="btn" style="left:617px;top:104px;width:16px;height:14px"></div>
<div class="btn" style="left:635px;top:104px;width:16px;height:14px"></div>
<div class="a" style="left:605px;top:113px;width:6px;height:2px;background:#808080"></div>
<div class="a" style="left:621px;top:106px;width:9px;height:8px;border:1px solid #000;border-top-width:2px"></div>
<svg class="a" style="left:638px;top:107px" width="9" height="8" viewBox="0 0 9 8"><path d="M1 0L8 7M8 0L1 7" stroke="#000" stroke-width="1.6"/></svg>
<div class="t" style="left:408px;top:134px;">Select a way to debug 'HelloJni':</div>
<div class="a" style="left:410px;top:150px;width:232px;height:170px;background:#fff;border-top:1px solid #808080;border-left:1px solid #808080;border-bottom:1px solid #fff;border-right:1px solid #fff;box-shadow:inset 1px 1px 0 #404040,inset -1px -1px 0 #d4d0c8"></div>
<div class="a" style="left:432px;top:152px;width:122px;height:17px;background:#0a246a"></div>
<div class="t" style="left:433px;top:154px;color:#fff">Android Application</div>
<div class="t" style="left:433px;top:171px;color:#000">Android JUnit Test</div>
<div class="t" style="left:433px;top:188px;color:#000">Android Native Application</div>
<div class="t" style="left:433px;top:205px;color:#000">Java Applet</div>
<div class="t" style="left:433px;top:222px;color:#000">Java Application</div>
<div class="t" style="left:433px;top:239px;color:#000">JUnit Test</div>
<div class="t" style="left:433px;top:256px;color:#000">Local C/C++ Application</div>
<svg class="a" style="left:416px;top:153px" width="16" height="16" viewBox="0 0 16 16"><rect x="0.5" y="1.5" width="14" height="13" fill="#7f9ab8" stroke="#4a6a98"/><rect x="1" y="2" width="13" height="2" fill="#b8d0e8"/><rect x="2" y="5" width="11" height="8" fill="#8aa4c0"/><path d="M6 6.5h4v5h-3a2.5 2.5 0 0 1 0-5" stroke="#2a4a5a" fill="none" stroke-width="1"/></svg>
<svg class="a" style="left:416px;top:170px" width="16" height="16" viewBox="0 0 16 16"><path d="M3 6h5M6.5 6v7a2.5 2.5 0 0 1-5 0" stroke="#2a9a5a" stroke-width="2.2" fill="none"/><path d="M9.5 9v4a2 2 0 0 0 4 0v-4" stroke="#d83a4a" stroke-width="1.6" fill="none"/><path d="M10 5V1h5v4h-3.5a2 2 0 0 1 0-4" stroke="#40a040" fill="none" stroke-width="1"/></svg>
<svg class="a" style="left:416px;top:187px" width="16" height="16" viewBox="0 0 16 16"><rect x="0" y="0" width="16" height="15" fill="#ff0000"/></svg>
<svg class="a" style="left:416px;top:204px" width="16" height="16" viewBox="0 0 16 16"><rect x="0.5" y="1.5" width="14" height="13" fill="#f0f6fc" stroke="#b09060"/><rect x="1" y="2" width="13" height="2" fill="#5a8ac8"/><path d="M2 6l2 2l2-2l2 2" stroke="#c88030" stroke-width="2" fill="none"/><path d="M10 6v5a2 2 0 0 1-3.5 1" stroke="#2a5ab8" stroke-width="1.8" fill="none"/></svg>
<svg class="a" style="left:416px;top:221px" width="16" height="16" viewBox="0 0 16 16"><rect x="0.5" y="1.5" width="14" height="13" fill="#f0f6fc" stroke="#b09060"/><rect x="1" y="2" width="13" height="2" fill="#5a8ac8"/><path d="M9 6v5a2 2 0 0 1-3.5 1" stroke="#2a5ab8" stroke-width="1.8" fill="none"/></svg>
<svg class="a" style="left:416px;top:238px" width="16" height="16" viewBox="0 0 16 16"><path d="M3 4h5M6.5 4v7a2.5 2.5 0 0 1-5 0" stroke="#2a9a5a" stroke-width="2.2" fill="none"/><path d="M9.5 7v4a2 2 0 0 0 4 0v-4" stroke="#d83a4a" stroke-width="1.6" fill="none"/></svg>
<svg class="a" style="left:416px;top:255px" width="16" height="16" viewBox="0 0 16 16"><rect x="0.5" y="1.5" width="14" height="13" fill="#f0f6fc" stroke="#b09060"/><rect x="1" y="2" width="13" height="2" fill="#5a8ac8"/><path d="M10 7a2.5 2.5 0 1 0 0 3.5" stroke="#2a5ab8" stroke-width="1.8" fill="none"/></svg>
<div class="a" style="left:410px;top:332px;width:231px;height:109px;border:1px solid #808080;box-shadow:inset 1px 1px 0 #fff,1px 1px 0 #fff"></div>
<div class="a" style="left:416px;top:328px;width:71px;height:8px;background:#d4d0c8"></div>
<div class="t" style="left:417px;top:328px;">Description</div>
<div class="t" style="left:417px;top:345px;">Debugs an Android Application</div>
<div class="a" style="left:452px;top:464px;width:92px;height:22px;border:1px solid #000"></div>
<div class="btn" style="left:453px;top:465px;width:90px;height:20px"></div>
<div class="t" style="left:491px;top:468px;">OK</div>
<div class="btn" style="left:549px;top:464px;width:93px;height:22px"></div>
<div class="t" style="left:576px;top:468px;">Cancel</div>
<svg class="a" style="left:414px;top:463px" width="22" height="22" viewBox="0 0 22 22"><defs><radialGradient id="hg" cx=".4" cy=".35" r=".7"><stop offset="0" stop-color="#fbfbfb"/><stop offset="1" stop-color="#dedede"/></radialGradient></defs><circle cx="11" cy="11" r="9.6" fill="url(#hg)" stroke="#4f6690" stroke-width="1.5"/><path d="M7.3 8.3a3.7 3.3 0 1 1 5.2 3.1c-1 .6-1.6 1.2-1.6 2.6" stroke="#4a5c84" stroke-width="2.8" fill="none"/><circle cx="10.9" cy="16.7" r="1.6" fill="#4a5c84"/></svg>
<div class="a" style="left:0px;top:618px;width:927px;height:39px;background:#d4d0c8"></div>
<div class="a" style="left:0px;top:619px;width:146px;height:20px;background:#e1e6f6"></div>
<div class="t" style="left:-34px;top:622px;">HelloJni/src</div>
<div class="a" style="left:0px;top:641px;width:146px;height:6px;background:linear-gradient(#a9b9d1,#cbd6e8)"></div>
<div class="a" style="left:0px;top:649px;width:122px;height:8px;background:#d4d0c8;border-top:1px solid #808080"></div>
<div class="a" style="left:122px;top:649px;width:1px;height:8px;background:#fff"></div>
<div class="a" style="left:125px;top:649px;width:22px;height:8px;border-top:1px solid #606060;border-left:1px solid #606060"></div>
<svg class="a" style="left:128px;top:651px" width="14" height="8" viewBox="0 0 14 8"><path d="M2 1v6M0 3l2-2l2 2" stroke="#1a3a7a" stroke-width="1.2" fill="none"/><rect x="5.5" y="1.5" width="8" height="6" fill="#fff" stroke="#1a3a7a"/></svg>
<div class="a" style="left:147px;top:619px;width:554px;height:38px;background:#d4d0c8;border-left:1px solid #fff;border-right:2px solid #404040"></div>
<div class="a" style="left:150px;top:624px;width:548px;height:1px;background:#808080"></div>
<div class="a" style="left:150px;top:625px;width:548px;height:1px;background:#fff"></div>
<svg class="a" style="left:165px;top:635px" width="22" height="22" viewBox="0 0 22 22"><defs><radialGradient id="hg" cx=".4" cy=".35" r=".7"><stop offset="0" stop-color="#fbfbfb"/><stop offset="1" stop-color="#dedede"/></radialGradient></defs><circle cx="11" cy="11" r="9.6" fill="url(#hg)" stroke="#4f6690" stroke-width="1.5"/><path d="M7.3 8.3a3.7 3.3 0 1 1 5.2 3.1c-1 .6-1.6 1.2-1.6 2.6" stroke="#4a5c84" stroke-width="2.8" fill="none"/><circle cx="10.9" cy="16.7" r="1.6" fill="#4a5c84"/></svg>
<div class="a" style="left:497px;top:637px;width:92px;height:24px;border:1px solid #000"></div>
<div class="btn" style="left:498px;top:638px;width:90px;height:22px"></div>
<div class="t" style="left:524px;top:642px;">Finish</div>
<div class="a" style="left:525px;top:654px;width:6px;height:1px;background:#000"></div>
<div class="btn" style="left:595px;top:637px;width:92px;height:24px"></div>
<div class="t" style="left:622px;top:642px;">Cancel</div>
<div class="a" style="left:702px;top:619px;width:50px;height:20px;background:#e1e6f6"></div>
<div class="a" style="left:702px;top:641px;width:52px;height:6px;background:linear-gradient(#a9b9d1,#cbd6e8)"></div>
<div class="a" style="left:754px;top:619px;width:8px;height:28px;background:linear-gradient(90deg,#a9b9d1,#d6e0ee)"></div>
<div class="a" style="left:754px;top:641px;width:6px;height:6px;background:#fff;border:1px solid #333"></div>
<div class="a" style="left:762px;top:619px;width:161px;height:28px;background:#dae4f1"></div>
<div class="a" style="left:702px;top:649px;width:221px;height:1px;background:#707070"></div>
<div class="a" style="left:923px;top:619px;width:4px;height:38px;background:#fff"></div>
<svg class="a" style="left:550px;top:35px" width="46" height="70" viewBox="0 0 46 70"><ellipse cx="22.5" cy="19" rx="17.3" ry="13.2" fill="none" stroke="#ee1111" stroke-width="4.5"/><path d="M26.5 31V64" stroke="#ee1111" stroke-width="4.6" stroke-linecap="round"/></svg>
</body></html>
